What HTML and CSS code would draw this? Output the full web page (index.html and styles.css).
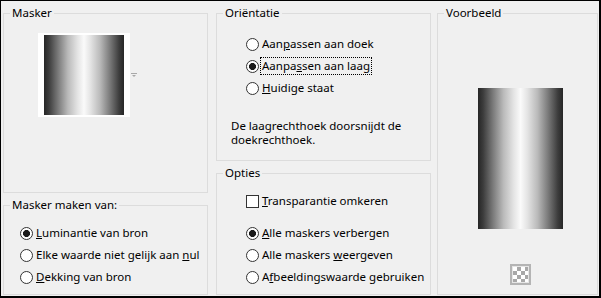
FILE: index.html
```html
<!DOCTYPE html>
<html>
  <head>
    <meta charset="UTF-8" />
    <title>Masker laden</title>
    <link rel="stylesheet" href="styles.css">
  </head>
  <body>
    <div class="dialog">
      <div class="col col-left">
        <fieldset class="group group-masker">
          <legend>Masker</legend>
          <div class="thumb-row">
            <div class="thumb"><div class="grad"></div></div>
            <svg class="drop-arrow" width="6" height="4" viewBox="0 0 6 4">
              <rect x="0" y="0" width="6" height="1" fill="#a8a8a8" />
              <polygon points="1,2 5,2 3,4" fill="#a8a8a8" />
            </svg>
          </div>
        </fieldset>
        <fieldset class="group group-source">
          <legend>Masker maken van:</legend>
          <div class="body">
            <div class="opt"><span class="radio checked"></span><span class="lbl"><u>L</u>uminantie van bron</span></div>
            <div class="opt"><span class="radio"></span><span class="lbl">Elke waarde niet gelijk aan <u>n</u>ul</span></div>
            <div class="opt"><span class="radio"></span><span class="lbl"><u>D</u>ekking van bron</span></div>
          </div>
        </fieldset>
      </div>

      <div class="col col-mid">
        <fieldset class="group group-orient">
          <legend>Oriëntatie</legend>
          <div class="body">
            <div class="opt"><span class="radio"></span><span class="lbl">Aan<u>p</u>assen aan doek</span></div>
            <div class="opt"><span class="radio checked"></span><span class="lbl focus">Aanpa<u>s</u>sen aan laag</span></div>
            <div class="opt"><span class="radio"></span><span class="lbl"><u>H</u>uidige staat</span></div>
          </div>
          <p class="desc">De laagrechthoek doorsnijdt de<br>doekrechthoek.</p>
        </fieldset>
        <fieldset class="group group-options">
          <legend>Opties</legend>
          <div class="body">
            <div class="opt"><span class="check"></span><span class="lbl"><u>T</u>ransparantie omkeren</span></div>
            <div class="radios">
              <div class="opt"><span class="radio checked"></span><span class="lbl"><u>A</u>lle maskers verbergen</span></div>
              <div class="opt"><span class="radio"></span><span class="lbl">Alle maskers <u>w</u>eergeven</span></div>
              <div class="opt"><span class="radio"></span><span class="lbl">A<u>f</u>beeldingswaarde gebruiken</span></div>
            </div>
          </div>
        </fieldset>
      </div>

      <div class="col col-right">
        <fieldset class="group group-preview">
          <legend>Voorbeeld</legend>
          <div class="preview grad"></div>
          <div class="checker-btn"><div class="checker"></div></div>
        </fieldset>
      </div>
    </div>
  </body>
</html>
```

FILE: styles.css
```css
* {
  box-sizing: border-box;
}
html,
body {
  margin: 0;
  padding: 0;
}
body {
  font-family: "Noto Sans", "Open Sans", sans-serif;
  font-size: 11.5px;
  color: #000;
  background: #f0f0f0;
}
.dialog {
  width: 601px;
  height: 298px;
  display: flex;
  gap: 8px;
  padding: 4px 1px 1px 2px;
  background: #f0f0f0;
  border-style: solid;
  border-color: #000;
  border-width: 1px 2px 2px 1px;
}
.col {
  display: flex;
  flex-direction: column;
  gap: 4px;
}
.col-left {
  width: 205px;
}
.col-mid {
  width: 215px;
  margin-right: -2px;
}
.col-right {
  flex: 1;
}
.group {
  margin: 0;
  padding: 0;
  min-width: 0;
  border: 1px solid #dcdcdc;
}
.group legend {
  margin-left: 6px;
  padding: 0 2px;
  line-height: 16px;
}
.group-masker {
  height: 188px;
}
.group-source {
  flex: 1;
}
.group-source .body {
  padding: 9px 0 0 16px;
}
.group-orient {
  height: 156px;
}
.group-orient .body {
  padding: 12px 0 0 29px;
}
.group-options {
  flex: 1;
}
.group-options .body {
  padding: 9px 0 0 29px;
}
.group-preview {
  flex: 1;
}

/* mask thumbnail */
.thumb-row {
  display: flex;
  align-items: center;
  margin: 12px 0 0 34px;
}
.thumb {
  width: 92px;
  height: 84px;
  padding: 2px 6px;
  background: #fff;
}
.thumb .grad {
  width: 80px;
  height: 80px;
}
.drop-arrow {
  margin-left: 1px;
}
.grad {
  background: linear-gradient(90deg, #262626 0%, #3c3c3c 6%, #7c7c7c 18%, #bababa 30%, #e4e4e4 42%, #fafafa 50%, #e4e4e4 58%, #bababa 70%, #7c7c7c 82%, #3c3c3c 94%, #262626 100%);
}

/* radio / checkbox rows */
.opt {
  display: flex;
  align-items: center;
  height: 22px;
}
.radio,
.check {
  flex: none;
  width: 13px;
  height: 13px;
  border: 1px solid #333;
  background: #fff;
  margin-right: 3px;
}
.radio {
  border-radius: 50%;
}
.radio.checked {
  background: radial-gradient(circle, #1a1a1a 0 3.2px, #fff 3.8px);
}
.lbl {
  white-space: nowrap;
  line-height: 16px;
}
.lbl.focus {
  outline: 1px dotted #000;
  outline-offset: 0;
  margin-left: -1px;
  padding: 0 1px;
}
.desc {
  margin: 20px 0 0 14px;
  line-height: 14px;
}
.radios {
  margin-top: 10px;
}

/* preview */
.preview {
  width: 85px;
  height: 141px;
  margin: 67px 0 0 40px;
}
.checker-btn {
  width: 21px;
  height: 21px;
  margin: 35px 0 0 72px;
  padding: 1px;
  border: 2px solid #b4b4b4;
  background: #e6e6e6;
}
.checker {
  width: 15px;
  height: 15px;
  background-color: #fff;
  background-image: linear-gradient(45deg, #a8a8a8 25%, transparent 25%, transparent 75%, #a8a8a8 75%),
    linear-gradient(45deg, #a8a8a8 25%, transparent 25%, transparent 75%, #a8a8a8 75%);
  background-size: 8px 8px;
  background-position: 0 0, 4px 4px;
}
```
